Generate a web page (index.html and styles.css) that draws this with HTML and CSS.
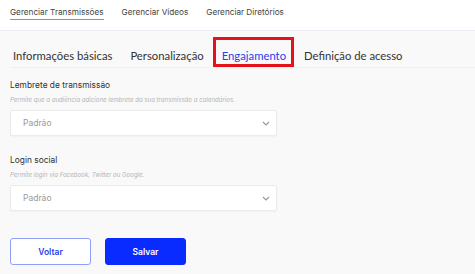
FILE: index.html
```html
<!DOCTYPE html>
<html lang="pt">

<head>
    <meta charset="UTF-8">
    <meta name="viewport" content="width=device-width, initial-scale=1.0">
    <title>Engajamento</title>
    <link rel="stylesheet" href="styles.css">
</head>

<body>
    <nav class="top-nav">
        <a class="top-link active" href="#">Gerenciar Transmissões</a>
        <a class="top-link" href="#">Gerenciar Vídeos</a>
        <a class="top-link" href="#">Gerenciar Diretórios</a>
    </nav>

    <div class="tabs">
        <a class="tab" href="#">Informações básicas</a>
        <a class="tab" href="#">Personalização</a>
        <a class="tab active" href="#">Engajamento</a>
        <a class="tab" href="#">Definição de acesso</a>
    </div>

    <form class="settings">
        <div class="field">
            <label class="field-label">Lembrete de transmissão</label>
            <p class="field-help">Permite que a audiência adicione lembrete da sua transmissão a calendários.</p>
            <div class="select">
                <span>Padrão</span>
                <svg class="chevron" width="8" height="5" viewBox="0 0 8 5"><path d="M1 1l3 3 3-3" fill="none" stroke="#999" stroke-width="1.2"/></svg>
            </div>
        </div>

        <div class="field">
            <label class="field-label">Login social</label>
            <p class="field-help">Permite login via Facebook, Twitter ou Google.</p>
            <div class="select">
                <span>Padrão</span>
                <svg class="chevron" width="8" height="5" viewBox="0 0 8 5"><path d="M1 1l3 3 3-3" fill="none" stroke="#999" stroke-width="1.2"/></svg>
            </div>
        </div>

        <div class="actions">
            <button type="button" class="btn btn-outline">Voltar</button>
            <button type="button" class="btn btn-primary">Salvar</button>
        </div>
    </form>
</body>

</html>
```

FILE: styles.css
```css
* {
    box-sizing: border-box;
}

body {
    margin: 0;
    background: #f9f9f9;
    font-family: Inter, "Noto Sans", sans-serif;
    color: #333;
}

/* barra superior */
.top-nav {
    display: flex;
    gap: 18px;
    height: 31px;
    padding: 7px 10px 0;
    background: #fff;
    border-bottom: 1px solid #eceef6;
}

.top-link {
    height: 13px;
    font-size: 8.2px;
    color: #444;
    text-decoration: none;
    white-space: nowrap;
}

.top-link.active {
    border-bottom: 1.5px solid #7b8cf0;
}

/* abas */
.tabs {
    display: flex;
    gap: 18px;
    height: 37px;
    margin-left: 10px;
    padding: 13px 0 0 3px;
    border-bottom: 1px solid #eef0f6;
}

.tab {
    position: relative;
    font-family: Lato, "Noto Sans", sans-serif;
    font-size: 11.3px;
    line-height: 24px;
    color: #333;
    text-decoration: none;
    white-space: nowrap;
}

.tab.active {
    color: #2b3cf0;
}

/* destaque vermelho sobre a aba ativa */
.tab.active::after {
    content: '';
    position: absolute;
    left: -9px;
    right: -8px;
    top: -7px;
    bottom: 0;
    border: 3px solid #e3121b;
}

/* formulario */
.settings {
    padding: 10px 10px 0;
}

.field {
    margin-bottom: 17px;
}

.field-label {
    display: block;
    font-size: 8.4px;
    line-height: 14px;
    color: #333;
}

.field-help {
    margin: 3px 0 5px;
    font-size: 6.1px;
    line-height: 10px;
    font-style: italic;
    color: #b5b5b5;
}

.select {
    display: flex;
    align-items: center;
    justify-content: space-between;
    width: 267px;
    height: 26px;
    padding: 0 6px 0 12px;
    background: #fff;
    border: 1px solid #ebebeb;
    border-radius: 2px;
    box-shadow: 0 1px 2px rgba(0, 0, 0, 0.04);
    font-size: 8.5px;
    color: #999;
}

.actions {
    display: flex;
    gap: 14px;
    margin-top: 27px;
}

.btn {
    width: 81px;
    height: 27px;
    border-radius: 3px;
    font-family: inherit;
    font-size: 8.5px;
    font-weight: 600;
    cursor: pointer;
}

.btn-outline {
    background: #fff;
    color: #2b3cf0;
    border: 1px solid #8f9ef8;
}

.btn-primary {
    background: #0a2bff;
    color: #fff;
    border: 1px solid #0a2bff;
}
```
